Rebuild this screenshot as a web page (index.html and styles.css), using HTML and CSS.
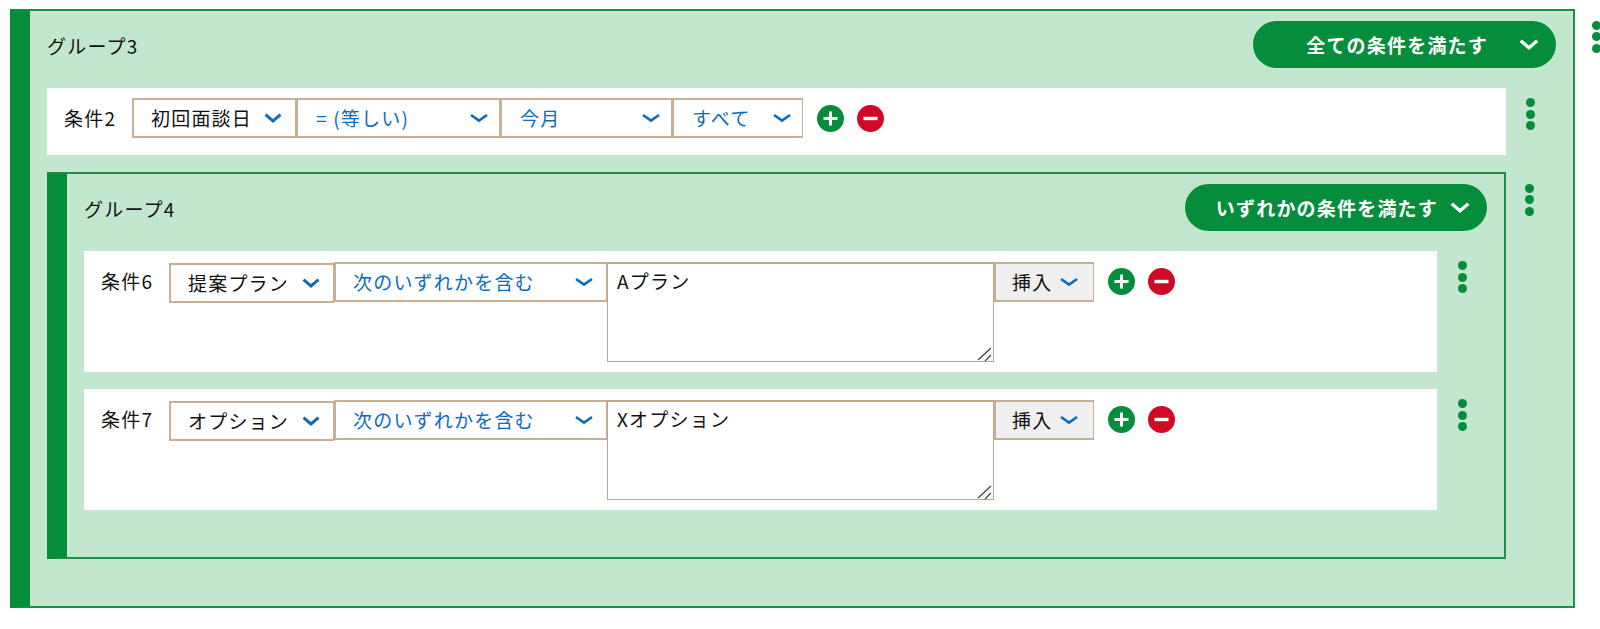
FILE: index.html
```html
<!DOCTYPE html>
<html lang="ja">
<head>
<meta charset="utf-8">
<title>条件グループ</title>
<link rel="stylesheet" href="styles.css">
</head>
<body>
<svg class="defs" width="0" height="0" aria-hidden="true">
  <symbol id="chev-bold" viewBox="0 0 18 10"><path d="M1.5 1.6 9 8l7.500-6.400" fill="none" stroke="currentColor" stroke-width="3"/></symbol>
  <symbol id="chev-thin" viewBox="0 0 18 10"><path d="M1 2l8 5.600L17 2" fill="none" stroke="currentColor" stroke-width="2.500"/></symbol>
  <symbol id="plus" viewBox="0 0 27 27"><circle cx="13.500" cy="13.500" r="13.500" fill="#068d3b"/><path d="M13.500 6.500v14M6.500 13.500h14" stroke="#fff" stroke-width="3"/></symbol>
  <symbol id="minus" viewBox="0 0 27 27"><circle cx="13.500" cy="13.500" r="13.500" fill="#d00a25"/><path d="M6.500 13.500h14" stroke="#fff" stroke-width="3.400"/></symbol>
  <symbol id="grip" viewBox="0 0 16 16"><path d="M1 14 14 2M8 15l6-6" fill="none" stroke="#444" stroke-width="1.300"/></symbol>
</svg>
<div class="item">
  <section class="group">
    <header class="group-head">
      <span class="group-title">グループ3</span>
      <button class="pill pill-wide"><span class="pill-text">全ての条件を満たす</span><svg class="pill-chev"><use href="#chev-bold"/></svg></button>
    </header>
    <div class="item">
      <div class="row row-short">
        <span class="row-label">条件2</span>
        <div class="sel sel-dark w-164"><span>初回面談日</span><svg class="chev"><use href="#chev-bold"/></svg></div>
        <div class="sel sel-blue w-204"><span>= (等しい)</span><svg class="chev"><use href="#chev-thin"/></svg></div>
        <div class="sel sel-blue w-172"><span>今月</span><svg class="chev"><use href="#chev-thin"/></svg></div>
        <div class="sel sel-blue w-131"><span>すべて</span><svg class="chev"><use href="#chev-thin"/></svg></div>
        <svg class="icon icon-first"><use href="#plus"/></svg>
        <svg class="icon icon-next"><use href="#minus"/></svg>
      </div>
      <div class="kebab kebab-top"><i></i><i></i><i></i></div>
    </div>
    <div class="item item-gap">
      <section class="group group-inner">
        <header class="group-head">
          <span class="group-title">グループ4</span>
          <button class="pill pill-narrow"><span class="pill-text">いずれかの条件を満たす</span><svg class="pill-chev"><use href="#chev-bold"/></svg></button>
        </header>
        <div class="item">
          <div class="row row-tall">
            <span class="row-label">条件6</span>
            <div class="sel sel-dark w-165 sel-low"><span>提案プラン</span><svg class="chev"><use href="#chev-bold"/></svg></div>
            <div class="sel sel-blue w-273"><span>次のいずれかを含む</span><svg class="chev"><use href="#chev-thin"/></svg></div>
            <div class="area-wrap"><textarea class="area">Aプラン</textarea><svg class="grip"><use href="#grip"/></svg></div>
            <div class="sel sel-insert"><span>挿入</span><svg class="chev"><use href="#chev-thin"/></svg></div>
            <svg class="icon icon-first icon-tall"><use href="#plus"/></svg>
            <svg class="icon icon-next icon-tall"><use href="#minus"/></svg>
          </div>
          <div class="kebab kebab-row"><i></i><i></i><i></i></div>
        </div>
        <div class="item item-gap-row">
          <div class="row row-tall">
            <span class="row-label">条件7</span>
            <div class="sel sel-dark w-165 sel-low"><span>オプション</span><svg class="chev"><use href="#chev-bold"/></svg></div>
            <div class="sel sel-blue w-273"><span>次のいずれかを含む</span><svg class="chev"><use href="#chev-thin"/></svg></div>
            <div class="area-wrap"><textarea class="area">Xオプション</textarea><svg class="grip"><use href="#grip"/></svg></div>
            <div class="sel sel-insert"><span>挿入</span><svg class="chev"><use href="#chev-thin"/></svg></div>
            <svg class="icon icon-first icon-tall"><use href="#plus"/></svg>
            <svg class="icon icon-next icon-tall"><use href="#minus"/></svg>
          </div>
          <div class="kebab kebab-row"><i></i><i></i><i></i></div>
        </div>
      </section>
      <div class="kebab kebab-group"><i></i><i></i><i></i></div>
    </div>
  </section>
  <div class="kebab kebab-outer"><i></i><i></i><i></i></div>
</div>
</body>
</html>
```

FILE: styles.css
```css
* { box-sizing: border-box; }
html, body { margin: 0; overflow: hidden; }
body {
  width: 1600px;
  height: 629px;
  padding: 9px 0 0 10px;
  background: #fff;
  color: #111;
  font-family: "Noto Sans CJK JP", "Noto Sans", sans-serif;
  font-size: 19px;
  letter-spacing: 1.2px;
  line-height: 26px;
}
.defs { position: absolute; }
.item { display: flex; align-items: flex-start; }
.item-gap { margin-top: 17px; }
.item-gap-row { margin-top: 17px; }

.group {
  flex: none;
  width: 1565px;
  padding: 10px 17px 47px 17px;
  background: #c3e6cf;
  border: 2px solid #1f8f47;
  border-left: 20px solid #068d3b;
}
.group-inner { width: 1459px; }
.group-head {
  display: flex;
  align-items: center;
  justify-content: space-between;
  height: 47px;
  margin-bottom: 20px;
}
.group-title { padding-top: 3px; }

.pill {
  display: flex;
  align-items: center;
  justify-content: flex-end;
  height: 47px;
  border: 0;
  border-radius: 24px;
  background: #068d3b;
  color: #fff;
  font: inherit;
  font-weight: 700;
  letter-spacing: 1.2px;
}
.pill-wide { width: 303px; padding-right: 17px; }
.pill-narrow { width: 302px; padding-right: 17px; }
.pill-text { margin-right: 31px; }
.pill-narrow .pill-text { margin-right: 12px; }
.pill-chev { width: 20px; height: 11px; flex: none; }

.row {
  flex: none;
  display: flex;
  align-items: flex-start;
  background: #fff;
  padding-left: 17px;
}
.item > .row { width: 1459px; }
.group-inner .item > .row { width: 1353px; }
.row-short { height: 67px; padding-top: 10px; }
.row-tall { height: 121px; padding-top: 11px; }
.row-label { width: 68px; flex: none; padding-top: 7px; }
.row-tall .row-label { padding-top: 6px; }

.sel {
  flex: none;
  display: flex;
  align-items: center;
  justify-content: space-between;
  height: 40px;
  padding: 0 11px 0 18px;
  background: #fff;
  border: 2px solid #c8b097;
  border-right-width: 1px;
}
.sel-dark { color: #111; padding: 0 13px 0 17px; }
.sel-blue { color: #0b6cbb; }
.sel-low { margin-top: 1px; }
.w-164 { width: 164px; }
.w-165 { width: 165px; }
.w-204 { width: 204px; }
.w-172 { width: 172px; }
.w-131 { width: 131px; }
.w-273 { width: 273px; padding: 0 13px 0 17px; }
.sel-insert {
  width: 100px;
  background: #efefef;
  color: #111;
  padding: 0 15px 0 16px;
}
.chev { flex: none; width: 18px; height: 10px; color: #0b6cbb; }

.area-wrap { flex: none; position: relative; width: 387px; height: 100px; }
.area {
  display: block;
  width: 100%;
  height: 100%;
  margin: 0;
  padding: 4px 9px;
  border: 1px solid #bfa589;
  border-top-width: 2px;
  border-radius: 0;
  background: #fff;
  color: #111;
  font: inherit;
  letter-spacing: 1.2px;
  outline: 0;
  resize: none;
}
.grip { position: absolute; right: 1px; bottom: 0; width: 16px; height: 16px; }

.icon { flex: none; width: 27px; height: 27px; margin-top: 7px; }
.icon-first { margin-left: 14px; }
.icon-next { margin-left: 13px; }
.icon-tall { margin-top: 6px; }

.kebab { flex: none; display: flex; flex-direction: column; gap: 2.5px; }
.kebab i { display: block; width: 9px; height: 9px; border-radius: 50%; background: #068d3b; }
.kebab-top { margin: 10px 0 0 20px; }
.kebab-row { margin: 10px 0 0 20.5px; }
.kebab-group { margin: 11.5px 0 0 18.5px; }
.kebab-outer { margin: 11.5px 0 0 17px; }
```
